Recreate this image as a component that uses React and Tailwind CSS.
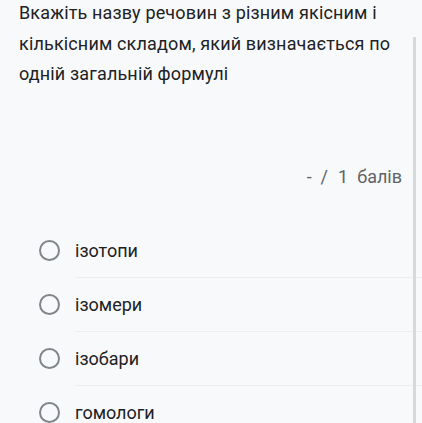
export default function App() {
  const opts = ["ізотопи", "ізомери", "ізобари", "гомологи"];
  return (
    <div className="relative w-[422px] h-[423px] overflow-hidden bg-[#f8f9fa]" style={{ fontFamily: "Roboto, 'Noto Sans', sans-serif" }}>
      <div className="absolute right-[6px] top-[37px] bottom-0 w-[3px] bg-[#d6d8da]" />
      <div className="pl-[19px] pr-[20px]">
        <p className="text-[18px] leading-[30.5px] text-[#202124] tracking-[0.15px] -mt-[2px]">
          Вкажіть назву речовин з різним якісним і кількісним складом, який визначається по одній загальній формулі
        </p>
        <div className="flex justify-end mt-[75px] pr-0 text-[18px] text-[#5f6368] leading-[24px]">
          <span className="mr-[9px]">-</span>
          <span className="mr-[10px]">/</span>
          <span className="mr-[9px]">1</span>
          <span>балів</span>
        </div>
      </div>
      <div className="mt-[35px]">
        {opts.map((o, i) => (
          <div key={o} className="flex items-center h-[54px] pl-[39px]">
            <div className="w-[21px] h-[21px] rounded-full border-2 border-[#80868b] shrink-0" />
            <div className={"ml-[15px] flex-1 h-full flex items-center text-[18px] text-[#202124] " + (i < 3 ? "border-b border-[#eceef0]" : "")}>
              {o}
            </div>
          </div>
        ))}
      </div>
    </div>
  );
}
